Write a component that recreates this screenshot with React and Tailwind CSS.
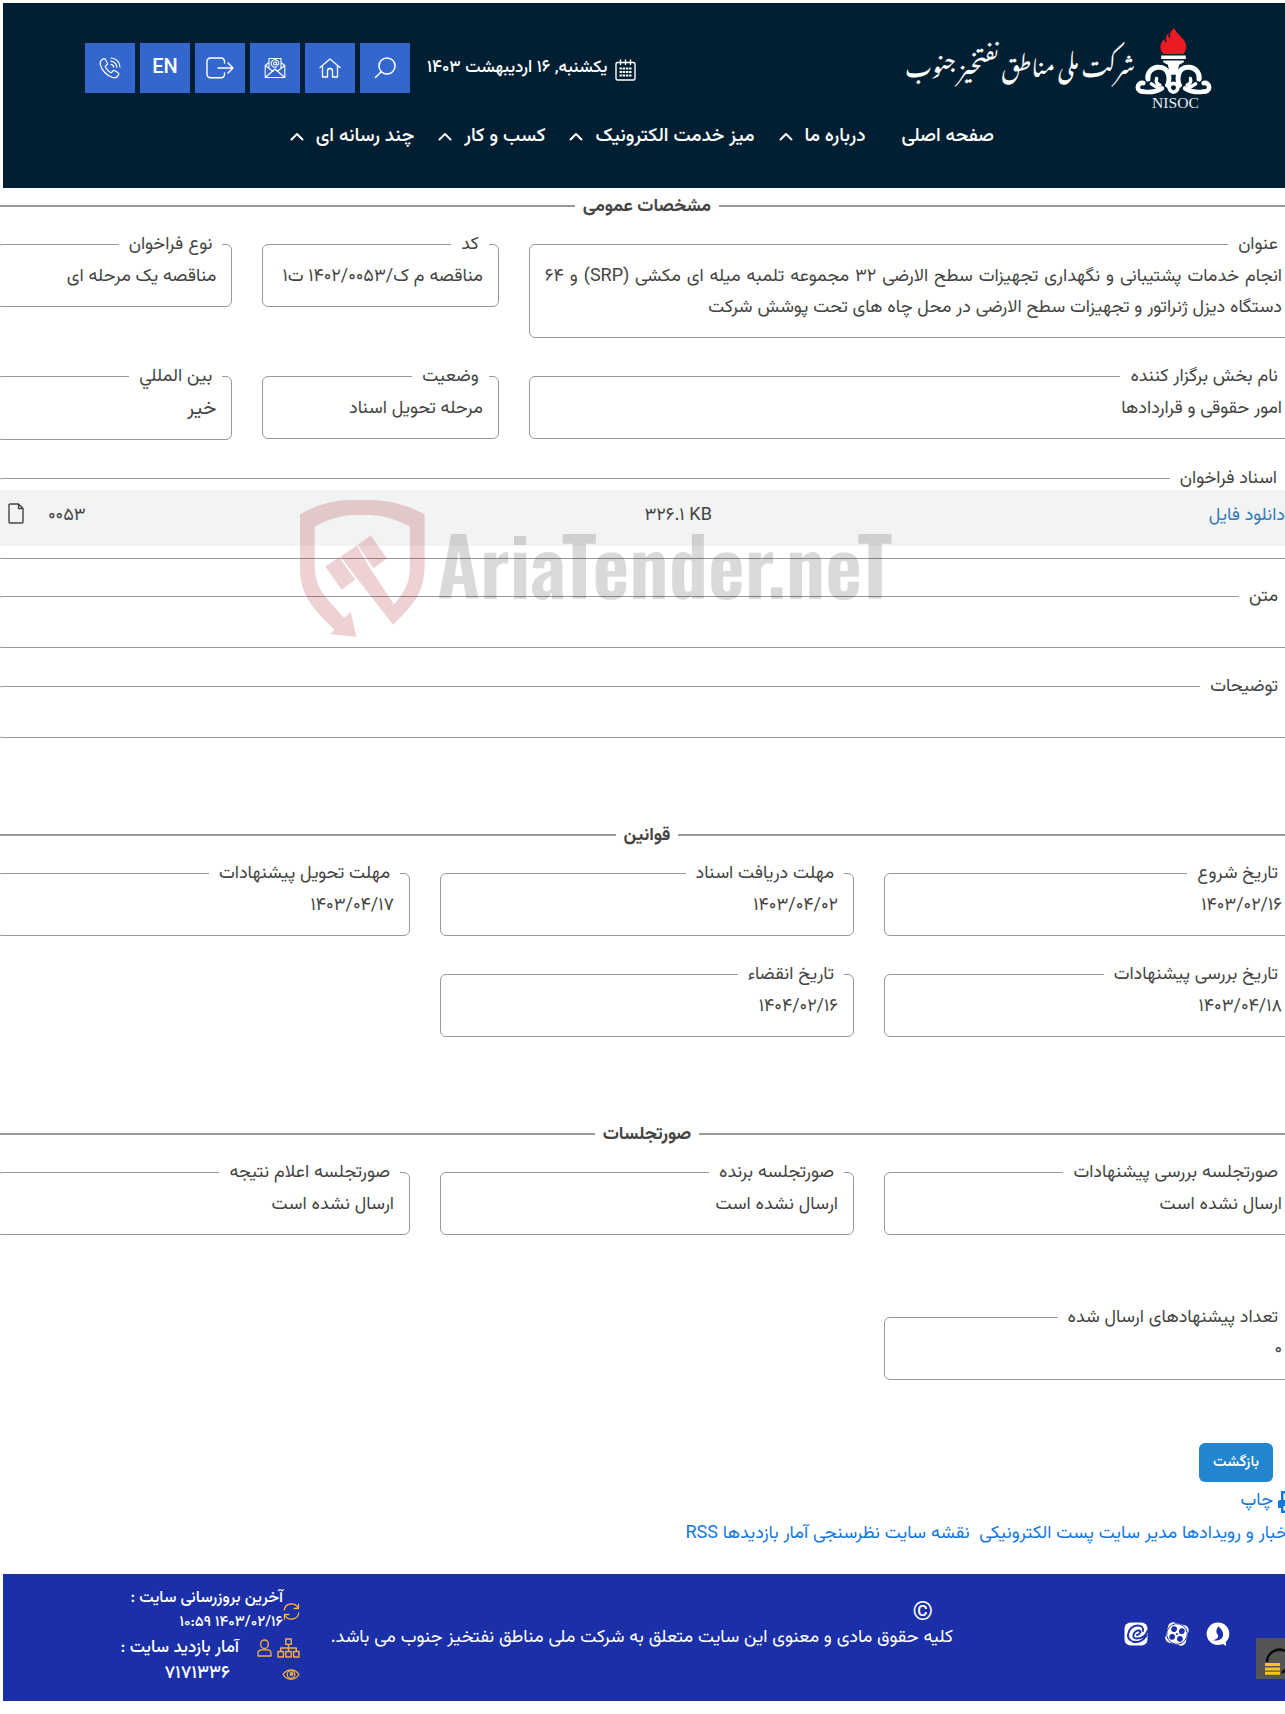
const FONT = "font-['Vazirmatn','DejaVu_Sans_Condensed','DejaVu_Sans',sans-serif]";

/* ---------- icons ---------- */

function Icon({ box = "0 0 24 24", className, children, sw = 1.2 }) {
  return (
    <svg viewBox={box} className={className} fill="none" stroke="currentColor" strokeWidth={sw} strokeLinecap="round" strokeLinejoin="round" aria-hidden="true">
      {children}
    </svg>
  );
}

const SearchIcon = () => (
  <Icon box="0 0 22 22" className="h-[22px] w-[22px]" sw={1.5}>
    <circle cx="13" cy="9" r="8" />
    <path d="M7.3 14.7 1.5 20.5" />
  </Icon>
);

const HomeIcon = () => (
  <Icon box="0 0 22 20" className="h-5 w-[22px]" sw={1.3}>
    <path d="M1 9.5 11 1l10 8.500M3.500 8v11h5v-6a2.500 2.500 0 0 1 5 0v6h5V8M3.500 19h5M13.500 19h5" />
  </Icon>
);

const MailIcon = () => (
  <Icon box="0 0 22 22" className="h-[22px] w-[22px]" sw={1.1}>
    <path d="M5 5.500V1.500h12v4M5 5.500 1.200 8.500v12h19.600v-12L17 5.500M1.200 8.500 9 14.500M20.800 8.500 13 14.500M1.200 20.500 11 12l9.800 8.500M5 5.500v6M17 5.500v6" />
    <circle cx="11" cy="6.500" r="1.500" />
    <path d="M12.500 5v2c0 1.500 2.300 1.200 2.300-.5a3.800 3.800 0 1 0-2 3.300" />
  </Icon>
);

const ExitIcon = () => (
  <Icon box="0 0 28 22" className="h-[22px] w-7" sw={1.4}>
    <path d="M18.500 6V4.500A3.300 3.300 0 0 0 15.200 1H4.300A3.300 3.300 0 0 0 1 4.300v13.200a3.300 3.300 0 0 0 3.300 3.300h10.900a3.300 3.300 0 0 0 3.300-3.300V16M12 11h14.800M22 6l5 5-5 5" />
  </Icon>
);

const PhoneIcon = () => (
  <Icon box="0 0 22 22" className="h-[22px] w-[22px]" sw={1.2}>
    <path d="M4.300 1.800C2 3 .8 5 1.300 7.500c1.200 5.800 6.500 11.200 12.300 13 2.600.8 5-.5 6-2.700.4-.9.100-1.600-.6-2.100l-3-2c-.8-.5-1.500-.4-2.100.3l-1 1.200c-.4.500-.9.500-1.400.2-2.200-1.300-3.800-3-5-5.200-.3-.5-.2-1 .2-1.400l1.200-1c.7-.6.8-1.300.3-2.100l-1.800-3.200c-.5-.9-1.300-1.100-2.100-.7Z" />
    <path d="M12 1c5 .5 8.500 4 9 9M12 4.200c3.200.5 5.400 2.700 5.900 5.900M12 7.300c1.600.3 2.600 1.300 2.900 2.900" />
  </Icon>
);

const CalendarIcon = () => (
  <Icon box="0 0 21 22" className="mt-1 h-[22px] w-[21px] shrink-0" sw={1.4}>
    <rect x="1" y="3.500" width="19" height="17.500" rx="1.500" />
    <path d="M5.500 1v4.500M10.500 1v4.500M15.500 1v4.500" />
    <path d="M4.500 9.500h12M4.500 13h12M4.500 16.500h12" strokeWidth="2" strokeLinecap="butt" strokeDasharray="2.400 .8" />
  </Icon>
);

const CaretUp = () => (
  <Icon box="0 0 14 9" className="h-[9px] w-[14px]" sw={2}>
    <path d="M1.500 7.500 7 2l5.500 5.500" />
  </Icon>
);

const FileIcon = () => (
  <Icon box="0 0 16 21" className="mt-[2px] h-[21px] w-4" sw={1.4}>
    <path d="M1 2a1 1 0 0 1 1-1h8.500L15 5.500V19a1 1 0 0 1-1 1H2a1 1 0 0 1-1-1ZM10.500 1v4.500H15" />
  </Icon>
);

const PrinterIcon = () => (
  <svg viewBox="0 0 20 22" className="h-[22px] w-5 shrink-0" fill="currentColor" aria-hidden="true">
    <path fillRule="evenodd" d="M3 0h11l3 3v6h1a2 2 0 0 1 2 2v6h-3v5H3v-5H0v-6a2 2 0 0 1 2-2h1Zm2.500 2.500V9h9V4H13V2.500Zm0 12.500v4.500h9V15Z" />
  </svg>
);

const RefreshIcon = () => (
  <Icon box="0 0 17 17" className="h-[17px] w-[17px]" sw={1.3}>
    <path d="M1.200 7A7.400 7.400 0 0 1 15 4.800M15.800 10A7.400 7.400 0 0 1 2 12.200M15.500 1v4.500H11M1.500 16v-4.500H6" />
  </Icon>
);

const SitemapIcon = () => (
  <Icon box="0 0 23 20" className="h-5 w-[23px]" sw={1.4}>
    <path d="M8.800 1h5.400v5.400H8.800ZM1 13.500h5.400V19H1ZM8.800 13.500h5.400V19H8.800ZM16.600 13.500H22V19h-5.400ZM11.500 6.400v7M3.700 13.500V10h15.600v3.500" />
  </Icon>
);

const UserIcon = () => (
  <Icon box="0 0 15 18" className="h-[18px] w-[15px]" sw={1.3}>
    <rect x="3.800" y="1" width="7.400" height="8.400" rx="3.500" />
    <path d="M4.500 10.800h6a3.500 3.500 0 0 1 3.500 3.500V17H1v-2.700a3.500 3.500 0 0 1 3.500-3.500Z" />
  </Icon>
);

const EyeIcon = () => (
  <Icon box="0 0 18 13" className="h-[13px] w-[18px]" sw={1.3}>
    <path d="M1 6.500C5 .2 13 .2 17 6.500c-4 6.300-12 6.300-16 0Z" />
    <circle cx="9" cy="6.500" r="3.800" />
    <circle cx="9.500" cy="6" r="1.300" fill="currentColor" />
  </Icon>
);

const SoroushIcon = () => (
  <svg viewBox="0 0 24 24" className="h-6 w-6" aria-hidden="true">
    <path fill="#fff" d="M12 .5a11.300 11.300 0 0 1 11.300 11.300c0 3.600-1.500 6.400-3.500 8.300l.4 3.900-3.400-2A11.300 11.300 0 1 1 12 .5Z" />
    <path fill="#1b2fa9" d="M12.500 4.500c3.500 3 5 6 4.500 9-.6 3.600-4.300 5.800-10 4.700 3.500-.8 5.500-2.200 5.200-4.400-.2-1.500-1.800-2-1.800-4.300 0-2 .8-3.700 2.100-5Z" />
  </svg>
);

const AparatIcon = () => (
  <svg viewBox="0 0 24 24" className="h-6 w-6" aria-hidden="true">
    <g transform="rotate(14 12 12)">
      <rect x="1.500" y="1.500" width="21" height="21" rx="5" fill="#fff" />
      <circle cx="12" cy="12" r="10.300" fill="none" stroke="#1b2fa9" strokeWidth=".9" />
      <g fill="#1b2fa9">
        <circle cx="8" cy="8" r="2.900" />
        <circle cx="16" cy="8" r="2.900" />
        <circle cx="8" cy="16" r="2.900" />
        <circle cx="16" cy="16" r="2.900" />
        <circle cx="12" cy="12" r="1" />
      </g>
    </g>
  </svg>
);

const EitaaIcon = () => (
  <svg viewBox="0 0 24 24" className="h-6 w-6" aria-hidden="true">
    <rect x=".5" y=".5" width="23" height="23" rx="6" fill="#fff" />
    <path fill="none" stroke="#1b2fa9" strokeWidth="1.900" strokeLinecap="round" d="M23.500 9c-2 5-6 7.500-11 7.500-2.500 0-3.500-1.500-3-3.500.7-3 3.200-4.700 5.500-4.500 2.500.3 1.500 3.500-2 4.500M7 18.500C4.500 17 3.700 15 4 12.500 4.500 7 9 3.500 13.500 3.500c4 0 6 2 5.500 5.500M8.500 19.500c5.500 1.500 10.500-.5 14-6" />
  </svg>
);

/* ---------- logo ---------- */

const NisocEmblem = () => (
  <svg viewBox="703 24 232 244" className="h-[81px] w-[77px] shrink-0 overflow-visible" role="img" aria-label="NISOC">
    <path fill="#ed1c24" d="M822 25c-12 8-16 18-12 30-6-2-8-8-5-16-10 8-11 18-6 30-5-2-8-6-8-12-8 8-13 18-11 28 1 8 5 14 10 17h58c6-5 10-13 9-24-1-18-14-24-21-33-6-7-12-12-14-20Z" />
    <path fill="#fff" d="M782 107h74v10h-74ZM788 122h62v5l-14 8-7 30h-20l-7-30-14-8Z" />
    <g fill="none" stroke="#fff" strokeLinecap="round">
      <path strokeWidth="15" d="M742 178c-6-42 60-50 63-8 1 14 0 20-4 26M896 178c6-42-60-50-63-8-1 14 0 20 4 26" />
      <circle cx="819" cy="204" r="13" strokeWidth="11" />
      <path strokeWidth="14" d="M728 190a13 13 0 1 0 0 25c22 5 40 0 56-9M910 190a13 13 0 1 1 0 25c-22 5-40 0-56-9" />
      <path strokeWidth="10" d="M768 176c-3 10 0 16 10 20M870 176c3 10 0 16-10 20M752 192l22 14M886 192l-22 14" />
    </g>
    <text direction="ltr" textAnchor="middle" x="825" y="264" fontFamily="Liberation Serif, serif" fontWeight="400" fontSize="47" fill="#e8edf2">NISOC</text>
  </svg>
);

/* ---------- watermark ---------- */

function Watermark() {
  return (
    <div dir="ltr" className="pointer-events-none absolute top-[500px] left-[300px] flex items-start gap-3">
      <svg viewBox="49 120 306 412" preserveAspectRatio="none" className="h-[137px] w-[125px] shrink-0" aria-hidden="true">
        <g fill="#aa1923" fillOpacity=".2">
          <path d="M49 163Q110 120 170 120h60q62 3 124 43v160c-2 80-30 115-77 172L190 358 148 290l40-33 36 75 55 102c22-30 39-60 39-110V200q-55-36-100-35h-34q-50 0-99 35v120c0 75 40 105 72 155l16-19 14 75-64-7 10-14C85 450 49 410 49 325Z" />
          <path d="m111 320 34-28 39 67-33 31ZM190 255l32-28 40 69-33 29Z" />
        </g>
      </svg>
      <span className="mt-[13px] font-['Oswald','Roboto_Condensed','Liberation_Sans_Narrow','Liberation_Sans',sans-serif] text-[80px] leading-[100px] font-semibold text-black/15">AriaTender.neT</span>
    </div>
  );
}

/* ---------- blocks ---------- */

const TOOLS = [
  { label: "جستجو", icon: <SearchIcon /> },
  { label: "خانه", icon: <HomeIcon /> },
  { label: "پست الکترونیکی", icon: <MailIcon /> },
  { label: "ورود", icon: <ExitIcon /> },
  { label: "English", icon: "EN" },
  { label: "تماس", icon: <PhoneIcon /> },
];

const MENU = ["درباره ما", "میز خدمت الکترونیک", "کسب و کار", "چند رسانه ای"];

function Header() {
  return (
    <header className="mt-[3px] ml-[3px] h-[185px] bg-[#001f33] text-white">
      <div className="flex items-start justify-between pt-[25px] pr-[73px] pl-[82px]">
        <a href="#home" className="flex items-center">
          <NisocEmblem />
          <span className="-mt-3 font-['Noto_Nastaliq_Urdu','Noto_Naskh_Arabic','Vazirmatn',serif] text-[22px] leading-[80px] font-medium whitespace-nowrap">شرکت ملی مناطق نفتخیز جنوب</span>
        </a>
        <div className="flex items-center gap-[17px] pt-[15px]">
          <p className="flex items-center gap-2 text-[17px] font-medium whitespace-nowrap">
            <CalendarIcon />
            یکشنبه, ۱۶ اردیبهشت ۱۴۰۳
          </p>
          <div className="flex gap-[5px]">
            {TOOLS.map((t) => (
              <a key={t.label} href="#tool" aria-label={t.label} className="flex h-[50px] w-[50px] items-center justify-center bg-[#3367ce] text-[20px] font-medium">
                {t.icon}
              </a>
            ))}
          </div>
        </div>
      </div>
      <nav className="mt-3 flex pr-[291px] text-[19px] leading-[31px] font-medium whitespace-nowrap">
        <a href="#main" className="ml-9">صفحه اصلی</a>
        {MENU.map((m) => (
          <a key={m} href="#menu" className="ml-6 flex items-center gap-3">
            {m}
            <CaretUp />
          </a>
        ))}
      </nav>
    </header>
  );
}

function Heading({ children }) {
  return (
    <h2 className="mb-2 flex items-center gap-2 font-bold before:h-[2px] before:flex-1 before:bg-[#999] after:h-[2px] after:flex-1 after:bg-[#999]">
      <span className="pt-[3px] leading-[28px]">{children}</span>
    </h2>
  );
}

function Field({ label, className = "", children }) {
  return (
    <fieldset className={`min-w-0 self-start rounded-[6px] border border-[#999] px-[15px] pt-[2px] pb-[13px] ${className}`}>
      <legend className="-mr-[6px] px-[10px] pt-[2px] leading-[29px]">{label}</legend>
      <div className="min-h-5 text-justify">{children}</div>
    </fieldset>
  );
}

function Footer() {
  return (
    <footer className="relative mt-6 ml-[3px] flex h-[127px] items-start bg-[#1b2fa9] pr-[55px] font-medium text-white">
      <div className="flex gap-[17px] pt-12">
        <a href="#soroush" aria-label="سروش"><SoroushIcon /></a>
        <a href="#aparat" aria-label="آپارات"><AparatIcon /></a>
        <a href="#eitaa" aria-label="ایتا"><EitaaIcon /></a>
      </div>
      <div className="mr-[171px] w-[613px] pt-7 whitespace-nowrap">
        <p className="pr-5 text-[26px] leading-[24px] font-normal">©</p>
        <p className="text-[18px] leading-[24px] font-normal">کلیه حقوق مادی و معنوی این سایت متعلق به شرکت ملی مناطق نفتخیز جنوب می باشد.</p>
      </div>
      <div className="mr-10 pt-[13px] text-[16px] whitespace-nowrap">
        <div className="flex items-center leading-[24px]">
          <span className="text-[#fbb03b]"><RefreshIcon /></span>
          <p>
            آخرین بروزرسانی سایت :<br />
            <span className="text-[15px]">۱۴۰۳/۰۲/۱۶ ۱۰:۵۹</span>
          </p>
        </div>
        <div className="flex items-center leading-[26px]">
          <span className="flex items-center gap-[5px] text-[#fbb03b]"><SitemapIcon /><UserIcon /></span>
          <span className="mr-[18px] text-[17px]">آمار بازدید سایت :</span>
        </div>
        <div className="flex items-center leading-[26px]">
          <span className="text-[#fbb03b]"><EyeIcon /></span>
          <span className="mr-[52px] text-[18px]">۷۱۷۱۳۳۶</span>
        </div>
      </div>
      <button type="button" aria-label="دسترسی" className="absolute top-16 right-0 h-[41px] w-[29px] bg-[#555]">
        <svg viewBox="0 0 29 41" className="h-[41px] w-[29px]" fill="none" aria-hidden="true">
          <path d="M11 24a12.500 12.500 0 0 1 18-11M26 35l4-4" stroke="#0b0b0b" strokeWidth="2.500" />
          <path d="M9 26.500h15M9 31h15M9 35.200h15" stroke="#f5c518" strokeWidth="3" />
        </svg>
      </button>
    </footer>
  );
}

export default function App() {
  return (
    <div dir="rtl" className={`relative overflow-hidden bg-white pb-[14px] text-[18px] leading-[31px] text-[#444] ${FONT}`}>
      <Header />
      <main className="-mr-[13px] -ml-1 pt-[2px]">
        <section>
          <Heading>مشخصات عمومی</Heading>
          <div className="mb-[23px] grid grid-cols-5 gap-x-[30px] gap-y-[23px]">
            <Field label="عنوان" className="col-span-3">
              انجام خدمات پشتیبانی و نگهداری تجهیزات سطح الارضی ۳۲ مجموعه تلمبه میله ای مکشی (SRP) و ۶۴ دستگاه دیزل ژنراتور و تجهیزات سطح الارضی در محل چاه های تحت پوشش شرکت
            </Field>
            <Field label="کد">مناقصه م ک/۱۴۰۲/۰۰۵۳ ت۱</Field>
            <Field label="نوع فراخوان">مناقصه یک مرحله ای</Field>
            <Field label="نام بخش برگزار کننده" className="col-span-3">امور حقوقی و قراردادها</Field>
            <Field label="وضعیت">مرحله تحویل اسناد</Field>
            <Field label="بین المللي"><span className="text-[20px]">خیر</span></Field>
          </div>
          <fieldset className="mb-[22px] rounded-[6px] border border-[#999] pr-3 pb-3">
            <legend className="mr-[-2px] px-[10px] pt-[2px] leading-[29px]">اسناد فراخوان</legend>
            <table className="-mt-1 w-full table-fixed bg-[#f2f4f4]">
              <tbody>
                <tr className="h-[56px] align-top">
                  <td className="w-[44.5%] pt-[11px]"><a href="#download" className="text-[#337ab7]">دانلود فایل</a></td>
                  <td className="pt-[11px]"><bdi dir="ltr">۳۲۶.۱ KB</bdi></td>
                  <td className="pt-[11px] pl-[11px]">
                    <span className="flex items-start justify-end gap-6">۰۰۵۳<FileIcon /></span>
                  </td>
                </tr>
              </tbody>
            </table>
          </fieldset>
          <Field label="متن" className="mb-[23px]" />
          <Field label="توضیحات" className="mb-[81px]" />
        </section>
        <section>
          <Heading>قوانین</Heading>
          <div className="mb-[81px] grid grid-cols-3 gap-x-[30px] gap-y-[23px]">
            <Field label="تاریخ شروع">۱۴۰۳/۰۲/۱۶</Field>
            <Field label="مهلت دریافت اسناد">۱۴۰۳/۰۴/۰۲</Field>
            <Field label="مهلت تحویل پیشنهادات">۱۴۰۳/۰۴/۱۷</Field>
            <Field label="تاریخ بررسی پیشنهادات">۱۴۰۳/۰۴/۱۸</Field>
            <Field label="تاریخ انقضاء">۱۴۰۴/۰۲/۱۶</Field>
          </div>
        </section>
        <section>
          <Heading>صورتجلسات</Heading>
          <div className="grid grid-cols-3 gap-x-[30px] gap-y-[67px]">
            <Field label="صورتجلسه بررسی پیشنهادات">ارسال نشده است</Field>
            <Field label="صورتجلسه برنده">ارسال نشده است</Field>
            <Field label="صورتجلسه اعلام نتیجه">ارسال نشده است</Field>
            <Field label="تعداد پیشنهادهای ارسال شده">۰</Field>
          </div>
        </section>
        <div className="pt-[63px] pr-[25px] leading-none">
          <button type="button" className="h-[39px] w-[74px] rounded-[6px] bg-[#2185d0] text-[15px] font-medium text-white">بازگشت</button>
        </div>
        <a href="#print" className="mt-1 flex w-fit items-center gap-[5px] text-[#1277e1]">
          <PrinterIcon />
          چاپ
        </a>
        <p className="pt-[2px] pr-[6px] whitespace-nowrap text-[#1277e1]">
          <a href="#news">اخبار و رویدادها</a> <a href="#admin">مدیر سایت</a> <a href="#mail">پست الکترونیکی</a>&nbsp; <a href="#map">نقشه سایت</a> <a href="#poll">نظرسنجی</a> <a href="#stats">آمار بازدیدها</a> <a href="#rss">RSS</a>
        </p>
      </main>
      <Footer />
      <Watermark />
    </div>
  );
}
